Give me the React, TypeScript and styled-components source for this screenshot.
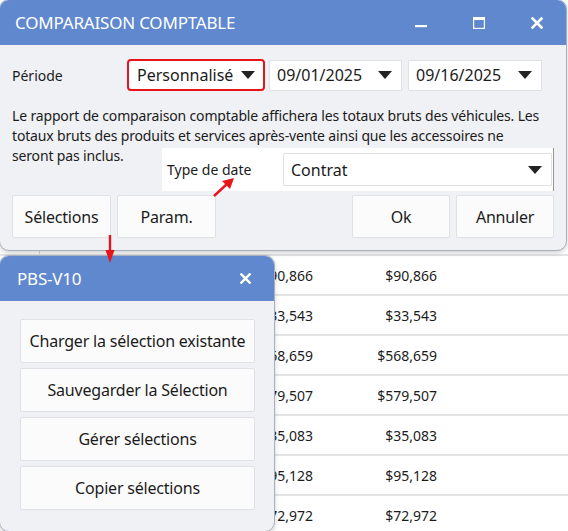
import React from "react";
import styled, { createGlobalStyle } from "styled-components";

const Global = createGlobalStyle`
  html, body { margin: 0; padding: 0; background: #ffffff; }
  body { font-family: "Noto Sans", "DejaVu Sans", sans-serif; color: #1b1b1b; }
  * { box-sizing: border-box; }
`;

const Page = styled.div`
  position: relative;
  width: 568px;
  height: 531px;
  overflow: hidden;
  background: #ffffff;
`;

/* ---------- background table ---------- */
const Table = styled.div`
  padding-top: 216px;
  display: flex;
  flex-direction: column;
`;

const HeaderRow = styled.div`
  height: 40px;
  display: flex;
  border-bottom: 2px solid #e4e4e6;
`;

const HeaderCell = styled.div`
  width: 40px;
  border-right: 1px solid #d8d8dc;
`;

const Row = styled.div`
  height: 40px;
  display: flex;
  align-items: center;
  border-bottom: 2px solid #e4e4e6;
  font-size: 14px;
`;

const Cell = styled.div<{ $w: number }>`
  width: ${(p) => p.$w}px;
  text-align: right;
`;

/* ---------- windows ---------- */
const Window = styled.div<{ $left: number; $top: number; $w: number; $h: number }>`
  position: absolute;
  left: ${(p) => p.$left}px;
  top: ${(p) => p.$top}px;
  width: ${(p) => p.$w}px;
  height: ${(p) => p.$h}px;
  background: #f0f1f5;
  border: 1px solid #a9afbb;
  border-radius: 10px;
  overflow: hidden;
  box-shadow: 0 2px 5px rgba(0, 0, 0, 0.18);
  display: flex;
  flex-direction: column;
`;

const TitleBar = styled.div<{ $h: number }>`
  height: ${(p) => p.$h}px;
  flex: none;
  background: #5f88cf;
  color: #ffffff;
  display: flex;
  align-items: center;
  justify-content: space-between;
  padding-left: 15px;
`;

const Title = styled.div<{ $pl?: number }>`
  font-size: 17px;
  letter-spacing: -0.2px;
  padding-left: ${(p) => p.$pl ?? 0}px;
`;

const Controls = styled.div`
  display: flex;
  height: 100%;
`;

const Control = styled.div<{ $w?: number }>`
  width: ${(p) => p.$w ?? 58}px;
  height: 100%;
  display: flex;
  align-items: center;
  justify-content: center;
`;

const Body = styled.div`
  padding: 0 12px;
  display: flex;
  flex-direction: column;
`;

const PeriodRow = styled.div`
  margin-top: 14px;
  height: 32px;
  display: flex;
  align-items: center;
`;

const Label = styled.div<{ $w: number }>`
  width: ${(p) => p.$w}px;
  font-size: 14px;
  flex: none;
`;

const Select = styled.div<{ $w: number; $red?: boolean; $ml?: number; $h?: number }>`
  width: ${(p) => p.$w}px;
  height: ${(p) => p.$h ?? 32}px;
  margin-left: ${(p) => p.$ml ?? 0}px;
  flex: none;
  background: #ffffff;
  border: ${(p) => (p.$red ? "2px solid #e8141c" : "1px solid #e0e1e6")};
  border-radius: ${(p) => (p.$red ? 4 : 1)}px;
  display: flex;
  align-items: center;
  justify-content: space-between;
  padding: 0 ${(p) => (p.$red ? 8 : 9)}px 0 ${(p) => (p.$red ? 8 : 7)}px;
  font-size: 16px;
`;

const Para = styled.div`
  margin-top: 15px;
  font-size: 14px;
  line-height: 20px;
  letter-spacing: -0.16px;
`;

const MixRow = styled.div`
  display: flex;
  align-items: flex-start;
`;

const LastLine = styled.div`
  width: 150px;
  flex: none;
  font-size: 14px;
  line-height: 20px;
  letter-spacing: -0.16px;
`;

const DatePanel = styled.div`
  margin-top: 2px;
  width: 396px;
  height: 43px;
  background: #ffffff;
  border-right: 1px solid #9c948c;
  display: flex;
  align-items: center;
  padding-left: 5px;
`;

const ButtonRow = styled.div`
  margin-top: 4px;
  display: flex;
  gap: 6px;
`;

const Spacer = styled.div`
  flex: 1;
`;

const Button = styled.div<{ $w: number; $h?: number }>`
  width: ${(p) => p.$w}px;
  height: ${(p) => p.$h ?? 43}px;
  flex: none;
  background: #fbfbfc;
  border: 1px solid #e0e1e6;
  border-radius: 2px;
  display: flex;
  align-items: center;
  justify-content: center;
  font-size: 16px;
  letter-spacing: -0.2px;
`;

const PopupBody = styled.div`
  padding: 18px 19px 0 20px;
  display: flex;
  flex-direction: column;
  gap: 5px;
`;

const Overlay = styled.svg`
  position: absolute;
  left: 0;
  top: 0;
  pointer-events: none;
`;

const Caret = () => (
  <svg width="14" height="8" viewBox="0 0 14 8">
    <path d="M0 0 L14 0 L7 8 Z" fill="#222222" />
  </svg>
);

const XIcon = ({ size = 12 }: { size?: number }) => (
  <svg width={size} height={size} viewBox="0 0 12 12">
    <path d="M1.5 1.5 L10.5 10.5 M10.5 1.5 L1.5 10.5" stroke="#ffffff" strokeWidth="2.6" strokeLinecap="square" />
  </svg>
);

const values = ["$90,866", "$33,543", "$568,659", "$579,507", "$35,083", "$95,128", "$72,972"];

export default function App() {
  return (
    <Page>
      <Global />
      <Table>
        <HeaderRow>
          <HeaderCell />
        </HeaderRow>
        {values.map((v) => (
          <Row key={v}>
            <Cell $w={313}>{v}</Cell>
            <Cell $w={124}>{v}</Cell>
          </Row>
        ))}
      </Table>

      <Window $left={-1} $top={-1} $w={568} $h={252}>
        <TitleBar $h={45}>
          <Title>COMPARAISON COMPTABLE</Title>
          <Controls>
            <Control>
              <svg width="12" height="12" viewBox="0 0 12 12">
                <rect x="0" y="8" width="12" height="2.2" fill="#ffffff" />
              </svg>
            </Control>
            <Control>
              <svg width="12" height="12" viewBox="0 0 12 12">
                <rect x="0.6" y="0.6" width="10.8" height="10.8" fill="none" stroke="#ffffff" strokeWidth="1.2" />
                <rect x="0" y="0" width="12" height="3" fill="#ffffff" />
              </svg>
            </Control>
            <Control>
              <XIcon />
            </Control>
          </Controls>
        </TitleBar>
        <Body>
          <PeriodRow>
            <Label $w={115}>Période</Label>
            <Select $w={138} $red>
              <span>Personnalisé</span>
              <Caret />
            </Select>
            <Select $w={133} $ml={4} $h={31}>
              <span>09/01/2025</span>
              <Caret />
            </Select>
            <Select $w={134} $ml={6} $h={31}>
              <span>09/16/2025</span>
              <Caret />
            </Select>
          </PeriodRow>
          <Para>
            Le rapport de comparaison comptable affichera les totaux bruts des véhicules. Les
            <br />
            totaux bruts des produits et services après-vente ainsi que les accessoires ne
          </Para>
          <MixRow>
            <LastLine>seront pas inclus.</LastLine>
            <DatePanel>
              <Label $w={116}>Type de date</Label>
              <Select $w={269} $h={33}>
                <span>Contrat</span>
                <Caret />
              </Select>
            </DatePanel>
          </MixRow>
          <ButtonRow>
            <Button $w={99}>Sélections</Button>
            <Button $w={99}>Param.</Button>
            <Spacer />
            <Button $w={98}>Ok</Button>
            <Button $w={98}>Annuler</Button>
          </ButtonRow>
        </Body>
      </Window>

      <Window $left={-1} $top={255} $w={276} $h={277}>
        <TitleBar $h={45}>
          <Title $pl={2}>PBS-V10</Title>
          <Control $w={58}>
            <XIcon size={11} />
          </Control>
        </TitleBar>
        <PopupBody>
          <Button $w={235} $h={44}>Charger la sélection existante</Button>
          <Button $w={235} $h={44}>Sauvegarder la Sélection</Button>
          <Button $w={235} $h={44}>Gérer sélections</Button>
          <Button $w={235} $h={44}>Copier sélections</Button>
        </PopupBody>
      </Window>

      <Overlay width="568" height="531" viewBox="0 0 568 531">
        <line x1="214" y1="196" x2="227" y2="184" stroke="#e8141c" strokeWidth="2.4" />
        <path d="M234 178 L222 181 L230 189 Z" fill="#e8141c" />
        <line x1="110" y1="235" x2="110" y2="252" stroke="#e8141c" strokeWidth="2.4" />
        <path d="M105.5 250 L114.5 250 L110 263 Z" fill="#e8141c" />
      </Overlay>
    </Page>
  );
}
